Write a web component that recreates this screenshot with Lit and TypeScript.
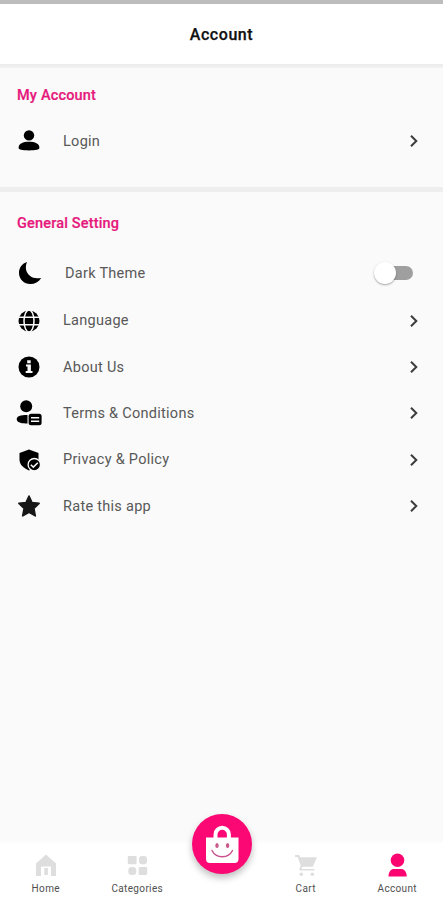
import { LitElement, html, svg, css } from "lit";
import { customElement } from "lit/decorators.js";

const icons: Record<string, unknown> = {
  person: svg`<circle cx="14" cy="8.400" r="5.200"/><path d="M3.600 20.800C3.600 16.600 8 14.800 14 14.800s10.400 1.800 10.400 6c0 1.900-3.500 2.600-10.400 2.600S3.600 22.700 3.600 20.800z"/>`,
  moon: svg`<path d="M12 2.900C9.700 8.300 11 13.500 14.900 16.800c3 2.500 6.600 3 11.300 2.100C23.500 23 19.600 25.100 15.300 25 9 24.900 4 20 4 13.900 4 8.700 7.200 4.300 12 2.900z"/>`,
  globe: svg`<circle cx="14" cy="14" r="10.500"/><g fill="none" stroke="#fafafa" stroke-width="1.500"><ellipse cx="14" cy="14" rx="5" ry="11"/><path d="M3 10.300h22M3 17.700h22"/></g>`,
  info: svg`<circle cx="14" cy="14" r="10.500"/><path fill="#fafafa" d="M12.200 7.300h3.500v3h-3.500zM11 11.600h4.900v6.500H17.500v1.900h-6.800v-1.900h1.800v-4.600H11z"/>`,
  terms: svg`<circle cx="11.200" cy="7.200" r="6"/><path d="M12.500 16v8.500C5.500 24.800 1.700 23.300 1.700 20.100c0-2.700 3.500-4.100 10.800-4.100z"/><rect x="13.600" y="14.700" width="13" height="11.500" rx="2.500"/><path stroke="#fafafa" stroke-width="1.400" d="M16 18.700h8.200M16 22.300h8.200"/>`,
  shield: svg`<path d="M14 3.600l9.500 3.500v6.500c0 5.500-4 8.600-9.500 10.800-5.500-2.200-9.500-5.500-9.500-10.800V7.100z"/><circle cx="19.300" cy="18.700" r="6.200" stroke="#fafafa" stroke-width="1.300"/><path fill="none" stroke="#fafafa" stroke-width="1.500" d="M15.800 18.700l2.500 2.400 4.500-4.300"/>`,
  star: svg`<path fill="#171717" stroke="#171717" stroke-width="1.600" stroke-linejoin="round" d="M14 4l3 6.600 7.100.8-5.200 4.900 1.400 7.600-6.300-3.700-6.300 3.700 1.400-7.600-5.200-4.900 7.100-.8z"/>`,
};

const row = (icon: string, label: string, extra = "") => html`
  <div class="row ${extra}">
    <svg class="ico" viewBox="0 0 28 28">${icons[icon]}</svg>
    <span class="label">${label}</span>
    ${icon === "moon"
      ? html`<span class="switch"><i class="knob"></i></span>`
      : html`<svg class="chev" viewBox="0 0 10 14"><path d="M2 1.800L7.300 7 2 12.200"/></svg>`}
  </div>`;

@customElement("app-root")
export class AppRoot extends LitElement {
  static styles = css`
    :host { display: flex; flex-direction: column; width: 443px; height: 900px; overflow: hidden;
      background: #fafafa; font-family: Roboto, sans-serif; color: #585858; }
    svg { display: block; flex: none; }
    .status { height: 4px; flex: none; background: #bdbdbd; }
    header { height: 60px; flex: none; background: #fff; display: flex; align-items: center; justify-content: center;
      color: #111; font-size: 16px; font-weight: 500; letter-spacing: .55px; -webkit-text-stroke: .25px #111; }
    .band { height: 4px; flex: none; background: linear-gradient(#ebebeb, #f2f2f2); }
    .band.mid { height: 5px; background: #eeeeee; }
    .account { height: 119px; flex: none; box-sizing: border-box; padding-top: 17px; }
    main { flex: 1; padding-top: 21px; }
    h2 { margin: 0; padding-left: 17px; height: 22px; line-height: 22px; font-size: 14.500px; font-weight: 500;
      letter-spacing: .17px; color: #e6187c; -webkit-text-stroke: .2px #e6187c; }
    .row { height: 46.300px; display: flex; align-items: center; padding: 0 24px 0 15px; }
    .row.login { margin-top: 11px; }
    .row.dark { height: 48px; margin-top: 14px; margin-bottom: .7px; }
    .ico { width: 28px; height: 28px; fill: #000; }
    .label { flex: 1; margin-left: 20px; font-size: 14.500px; letter-spacing: .28px; white-space: nowrap; }
    .dark .label { margin-left: 22px; }
    .chev { width: 10px; height: 14px; fill: none; stroke: #3c3c3c; stroke-width: 2; }
    .switch { position: relative; width: 35px; height: 14px; margin-right: 6px; border-radius: 7px; background: #9f9f9f; }
    .knob { position: absolute; left: -4px; top: -4px; width: 22px; height: 22px; border-radius: 50%; background: #fff;
      box-shadow: 0 1px 2px rgba(0,0,0,.35); }
    nav { position: relative; height: 57px; flex: none; background: #fff; display: flex;
      box-shadow: 0 -1px 5px rgba(255,255,255,.9); }
    .tab { width: 91.500px; display: flex; flex-direction: column; align-items: center; padding-top: 9px; box-sizing: border-box;
      font-size: 10px; letter-spacing: .35px; line-height: 14px; color: #505050; }
    .tab svg { width: 26px; height: 26px; fill: #dedede; margin-bottom: 4px; }
    .tab.active svg { fill: #fb0670; }
    .gap { flex: 1; }
    .fab { position: absolute; left: 192px; top: -29px; width: 60px; height: 60px; border-radius: 50%; background: #fb0874;
      box-shadow: 0 4px 7px rgba(0,0,0,.25); }
    .fab svg { width: 60px; height: 60px; }
  `;

  render() {
    return html`
      <div class="status"></div>
      <header>Account</header>
      <div class="band"></div>
      <section class="account">
        <h2>My Account</h2>
        ${row("person", "Login", "login")}
      </section>
      <div class="band mid"></div>
      <main>
        <h2>General Setting</h2>
        ${row("moon", "Dark Theme", "dark")}
        ${row("globe", "Language")}
        ${row("info", "About Us")}
        ${row("terms", "Terms & Conditions")}
        ${row("shield", "Privacy & Policy")}
        ${row("star", "Rate this app")}
      </main>
      <nav>
        <div class="tab">
          <svg viewBox="0 0 26 26"><path d="M13 2.500L23 11.500V24h-5v-9.500H8V24H3V11.500z"/><path d="M11.300 16h3.600v7h-3.600z"/></svg>Home
        </div>
        <div class="tab">
          <svg viewBox="0 0 26 26"><rect x="3.800" y="4" width="8.800" height="8.300" rx="1"/><rect x="15" y="4" width="8" height="8.300" rx="3"/><rect x="4.300" y="15" width="8" height="8" rx="3.500"/><rect x="14.700" y="15" width="8.500" height="8" rx="1"/></svg>Categories
        </div>
        <div class="gap"></div>
        <div class="tab">
          <svg viewBox="0 0 26 26"><path d="M2 3h4l1.200 2.300H24l-4.200 9.500H9.500l-1 2.200h13V18.500H7l-.8-1.300 1.600-3.400L4.700 5H2z"/><circle cx="8.300" cy="22.300" r="1.800"/><circle cx="19.300" cy="22.300" r="1.800"/></svg>Cart
        </div>
        <div class="tab active">
          <svg viewBox="0 0 26 26"><circle cx="13.500" cy="8.300" r="6.800"/><path d="M4.500 24.500c0-5 2.500-7.500 5.500-7.500h7c3.200 0 5.700 2.500 5.700 7.500z"/></svg>Account
        </div>
        <div class="fab">
          <svg viewBox="0 0 60 60">
            <path fill="none" stroke="#fff" stroke-width="4" d="M23.500 25v-4.500a6.700 6.700 0 0 1 13.400 0V25"/>
            <path fill="#fff" d="M14 23.500h32.500V45a4 4 0 0 1-4 4H18a4 4 0 0 1-4-4z"/>
            <g fill="#c85a8c"><ellipse cx="25" cy="31.500" rx="1.700" ry="2.500"/><ellipse cx="35.600" cy="31.500" rx="1.700" ry="2.500"/></g>
            <path fill="none" stroke="#c9508a" stroke-width="1.400" stroke-linecap="round" d="M20 36.500c4 8.300 16.500 8.300 20.500 0"/>
          </svg>
        </div>
      </nav>`;
  }
}
